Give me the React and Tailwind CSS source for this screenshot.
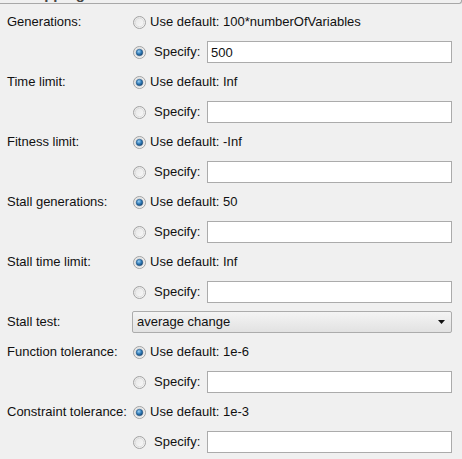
import React from "react";

const rows = [
  { label: "Generations:", def: "100*numberOfVariables", specified: "500" },
  { label: "Time limit:", def: "Inf" },
  { label: "Fitness limit:", def: "-Inf" },
  { label: "Stall generations:", def: "50" },
  { label: "Stall time limit:", def: "Inf" },
  { label: "Stall test:", select: "average change" },
  { label: "Function tolerance:", def: "1e-6" },
  { label: "Constraint tolerance:", def: "1e-3" },
];

function Radio({ checked }) {
  return (
    <svg width="13" height="13" viewBox="0 0 13 13" className="shrink-0">
      <defs>
        <linearGradient id="rg-bg" x1="0" y1="0" x2="1" y2="1">
          <stop offset="0" stopColor="#e4e4e4" />
          <stop offset="1" stopColor="#fbfbfb" />
        </linearGradient>
        <radialGradient id="rg-dot" cx="0.4" cy="0.35" r="0.7">
          <stop offset="0" stopColor="#9fd2f5" />
          <stop offset="0.55" stopColor="#2c78b5" />
          <stop offset="1" stopColor="#143d66" />
        </radialGradient>
      </defs>
      <circle cx="6.5" cy="6.5" r="6" fill="url(#rg-bg)" stroke="#a2a2a2" strokeWidth="1" />
      <circle cx="6.5" cy="6.5" r="4.3" fill="none" stroke="#d8d8d8" strokeWidth="0.8" />
      {checked && <circle cx="6.5" cy="6.5" r="3.3" fill="url(#rg-dot)" stroke="#1f4e7d" strokeWidth="0.5" />}
    </svg>
  );
}

function TextBox({ value }) {
  return (
    <div className="flex h-[22px] w-[245px] items-center border border-[#ababab] bg-white px-[3px] text-[13px] leading-none">
      {value}
    </div>
  );
}

export default function App() {
  return (
    <div
      className="relative h-[459px] w-[462px] overflow-hidden bg-[#f0f0f0] text-[13px] text-[#111]"
      style={{ fontFamily: '"Liberation Sans", Arial, sans-serif' }}
    >
      {/* bottom of the panel header above */}
      <div className="relative -ml-2 h-[4px] w-[470px] overflow-hidden rounded-br-[3px] border-b border-r border-[#a8a8a8]">
        <span className="absolute left-[28px] top-[-17px] text-[15px] font-bold text-[#444]">Stopping criteria</span>
      </div>

      <div className="flex flex-col pt-[3px]">
        {rows.map((r) =>
          r.select ? (
            <div key={r.label} className="flex h-[30px] items-center">
              <span className="w-[132px] pl-[7px]">{r.label}</span>
              <div className="flex h-[22px] w-[320px] items-center justify-between rounded-[2px] border border-[#acacac] bg-gradient-to-b from-[#f4f4f4] to-[#e2e2e2] pl-[4px] pr-[6px]">
                <span>{r.select}</span>
                <svg width="7" height="4" viewBox="0 0 7 4">
                  <path d="M0 0 H7 L3.5 4 Z" fill="#111" />
                </svg>
              </div>
            </div>
          ) : (
            <div key={r.label} className="flex flex-col">
              <div className="flex h-[30px] items-center">
                <span className="w-[133px] whitespace-nowrap pl-[7px]">{r.label}</span>
                <Radio checked={!r.specified} />
                <span className="ml-[4px]">Use default: {r.def}</span>
              </div>
              <div className="flex h-[30px] items-center">
                <span className="w-[133px]" />
                <Radio checked={!!r.specified} />
                <span className="ml-[8px] w-[53px]">Specify:</span>
                <TextBox value={r.specified || ""} />
              </div>
            </div>
          )
        )}
      </div>
    </div>
  );
}
